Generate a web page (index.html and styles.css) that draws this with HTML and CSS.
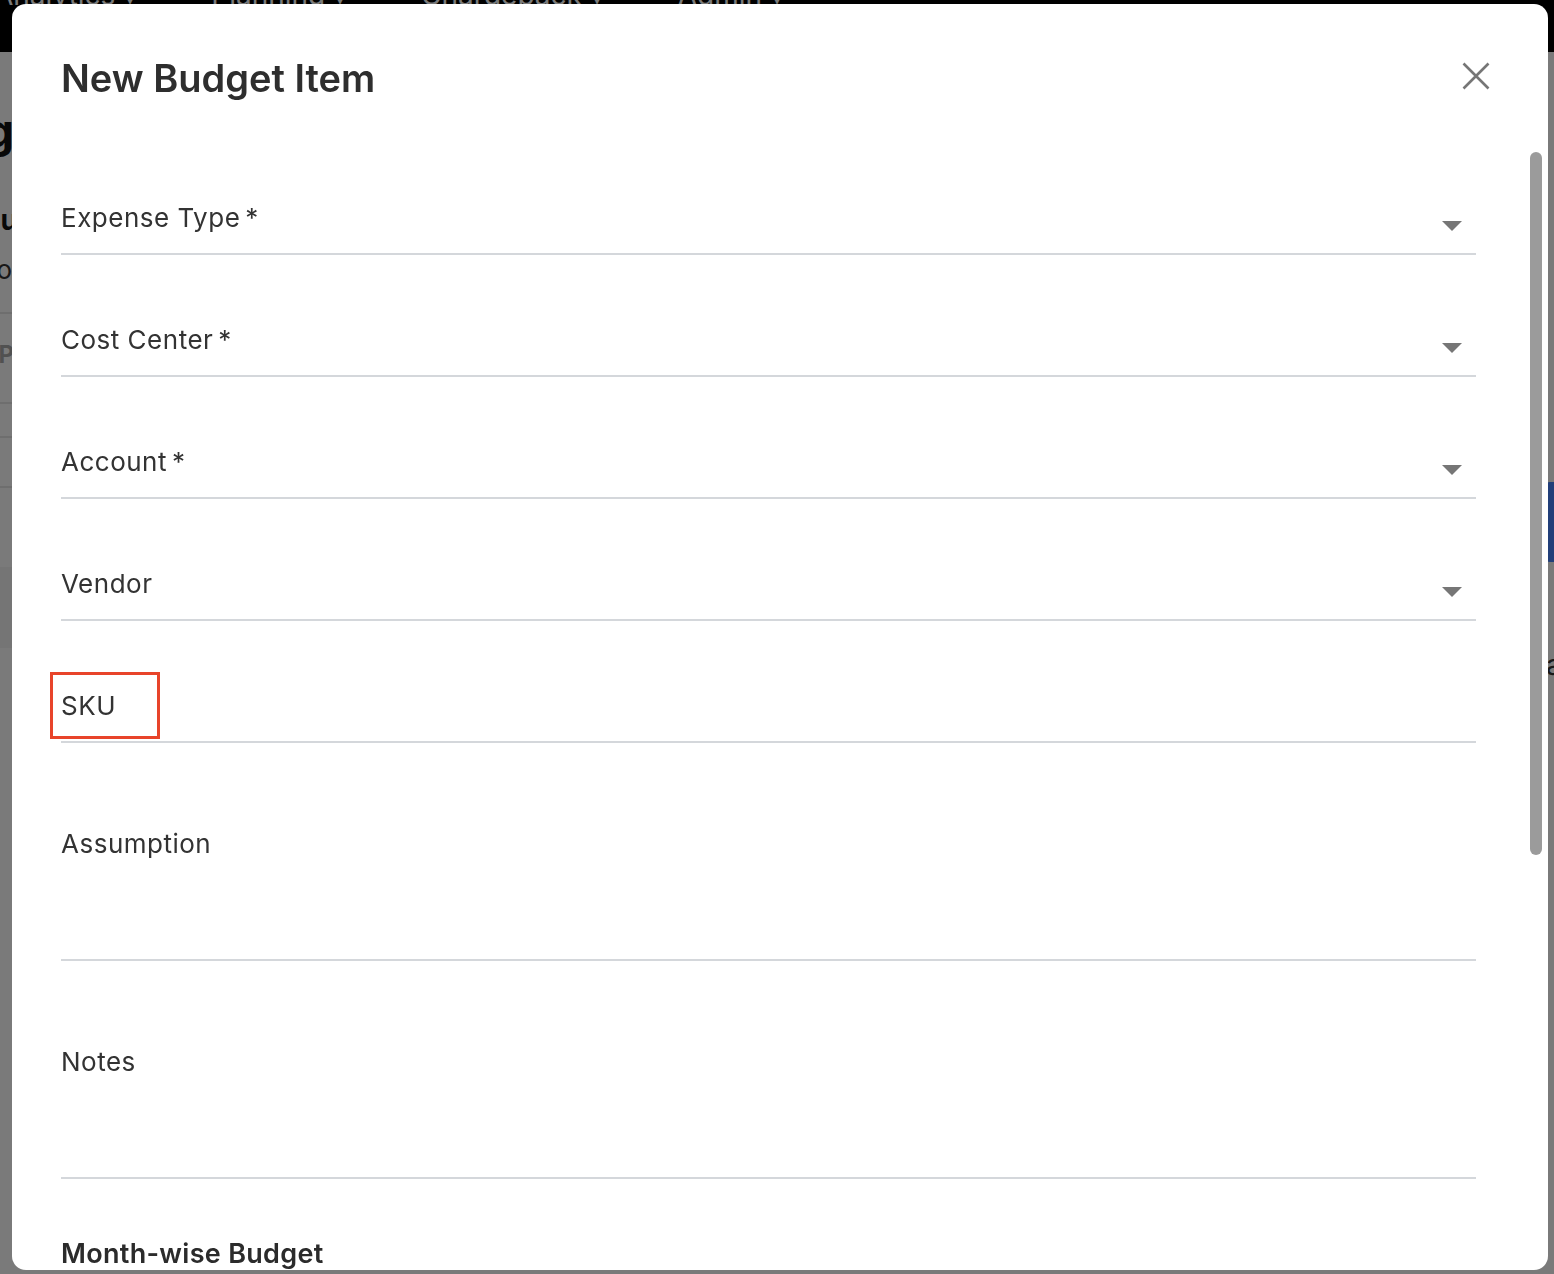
FILE: index.html
```html
<!DOCTYPE html>
<html lang="en">
<head>
    <meta charset="UTF-8">
    <meta name="viewport" content="width=device-width, initial-scale=1.0">
    <title>New Budget Item</title>
    <link rel="stylesheet" href="styles.css">
</head>
<body>
    <!-- Strona w tle -->
    <div class="page">
        <header class="topbar">
            <nav class="nav">
                <span class="nav-item nav-analytics">Analytics ▾</span>
                <span class="nav-item">Planning ▾</span>
                <span class="nav-item">Chargeback ▾</span>
                <span class="nav-item">Admin ▾</span>
            </nav>
        </header>
        <div class="page-body">
            <div class="page-left">
                <div class="frag frag-title">Budg</div>
                <div class="frag frag-sub">Menu</div>
                <div class="frag frag-text">Info</div>
                <div class="frag-row"></div>
                <div class="frag frag-small">AP</div>
                <div class="frag-row frag-row-2"></div>
                <div class="frag-row frag-row-3"></div>
                <div class="frag-row frag-row-4"></div>
                <div class="frag-block"></div>
            </div>
            <div class="page-right">
                <div class="blue-btn"></div>
                <div class="frag frag-right">a</div>
            </div>
        </div>
    </div>
    <div class="overlay"></div>

    <!-- Okno dialogowe -->
    <div class="modal">
        <div class="modal-header">
            <h1 class="modal-title">New Budget Item</h1>
            <button class="close" aria-label="Close">
                <svg width="28" height="28" viewBox="0 0 28 28">
                    <path d="M1.5 1.5 L26.5 26.5 M26.5 1.5 L1.5 26.5" stroke="#767676" stroke-width="2.6" fill="none"/>
                </svg>
            </button>
        </div>

        <div class="modal-body">
            <div class="field">
                <span class="label">Expense Type<span class="req">*</span></span>
                <span class="caret"></span>
            </div>
            <div class="field">
                <span class="label">Cost Center<span class="req">*</span></span>
                <span class="caret"></span>
            </div>
            <div class="field">
                <span class="label">Account<span class="req">*</span></span>
                <span class="caret"></span>
            </div>
            <div class="field">
                <span class="label">Vendor</span>
                <span class="caret"></span>
            </div>
            <div class="field">
                <span class="label label-marked">SKU</span>
            </div>
            <div class="field field-area">
                <span class="label">Assumption</span>
            </div>
            <div class="field field-area">
                <span class="label">Notes</span>
            </div>
            <h2 class="section-title">Month-wise Budget</h2>
        </div>

        <div class="scrollbar"></div>
    </div>
</body>
</html>
```

FILE: styles.css
```css
body {
    margin: 0;
    padding: 0;
    font-family: Inter, "Noto Sans", sans-serif;
    background-color: #ffffff;
    overflow: hidden;
    height: 1274px;
}

/* strona w tle */
.page {
    height: 1274px;
}
.topbar {
    height: 52px;
    background-color: #000;
    overflow: hidden;
}
.nav {
    display: flex;
    margin-top: -22px;
    font-size: 28px;
    color: #fff;
}
.nav-item {
    margin-right: 74px;
}
.nav-analytics {
    margin-left: -6px;
}
.page-body {
    display: flex;
    justify-content: space-between;
}
.page-left {
    width: 14px;
    display: flex;
    flex-direction: column;
    align-items: flex-end;
}
.frag {
    white-space: nowrap;
    color: #111;
}
.frag-title {
    margin-top: 48px;
    height: 60px;
    line-height: 60px;
    font-size: 46px;
    font-weight: 700;
}
.frag-sub {
    margin-top: 40px;
    height: 40px;
    line-height: 40px;
    font-size: 28px;
    font-weight: 700;
    margin-right: -4px;
}
.frag-text {
    margin-top: 10px;
    height: 40px;
    line-height: 40px;
    font-size: 26px;
    margin-right: 2px;
    color: #333;
}
.frag-row {
    width: 14px;
    margin-top: 22px;
    border-top: 2px solid #e6e6e6;
}
.frag-small {
    margin-top: 26px;
    height: 30px;
    line-height: 30px;
    font-size: 24px;
    font-weight: 700;
    color: #aaa;
}
.frag-row-2 {
    margin-top: 32px;
}
.frag-row-3 {
    margin-top: 32px;
}
.frag-row-4 {
    margin-top: 48px;
}
.frag-block {
    width: 14px;
    height: 81px;
    margin-top: 79px;
    background-color: #f4f4f4;
}
.page-right {
    width: 8px;
    display: flex;
    flex-direction: column;
}
.blue-btn {
    width: 40px;
    height: 80px;
    margin-top: 430px;
    background-color: #4785fe;
    border-radius: 4px;
}
.frag-right {
    margin-top: 86px;
    font-size: 28px;
    color: #333;
}

.overlay {
    position: fixed;
    inset: 0;
    background-color: rgba(0, 0, 0, 0.52);
}

/* okno */
.modal {
    position: fixed;
    top: 4px;
    left: 12px;
    width: 1536px;
    height: 1266px;
    background-color: #fff;
    border-radius: 14px;
    overflow: hidden;
    box-sizing: border-box;
    padding: 50px 72px 0 49px;
}
.modal-header {
    display: flex;
    justify-content: space-between;
    align-items: center;
    height: 48px;
}
.modal-title {
    margin: 0;
    font-size: 38px;
    font-weight: 600;
    letter-spacing: 0;
    color: #2e2e2e;
    line-height: 48px;
}
.close {
    border: none;
    background: none;
    padding: 0;
    margin-right: -14px;
    margin-top: -4px;
    width: 28px;
    height: 28px;
    cursor: pointer;
}
.close svg {
    display: block;
}

.modal-body {
    display: flex;
    flex-direction: column;
    padding-top: 99px;
}
.field {
    display: flex;
    justify-content: space-between;
    align-items: flex-start;
    padding-bottom: 20px;
    margin-bottom: 68px;
    border-bottom: 2px solid #d4d7db;
}
.field-area {
    margin-top: 16px;
    padding-bottom: 100px;
}
.label {
    position: relative;
    top: 1px;
    font-size: 26px;
    line-height: 32px;
    color: #333;
    letter-spacing: 0.5px;
}
.req {
    margin-left: 5px;
}
.label-marked::after {
    content: "";
    position: absolute;
    left: -11px;
    top: -18px;
    width: 104px;
    height: 61px;
    border: 3px solid #e8442a;
}
.caret {
    width: 0;
    height: 0;
    margin-top: 20px;
    margin-right: 14px;
    border-left: 10px solid transparent;
    border-right: 10px solid transparent;
    border-top: 10px solid #767676;
}
.section-title {
    margin: -9px 0 0;
    font-size: 27px;
    line-height: 32px;
    font-weight: 600;
    color: #2b2b2b;
    letter-spacing: 0.3px;
}

.scrollbar {
    position: absolute;
    top: 148px;
    right: 6px;
    width: 12px;
    height: 703px;
    border-radius: 6px;
    background-color: #9b9b9b;
}
```
